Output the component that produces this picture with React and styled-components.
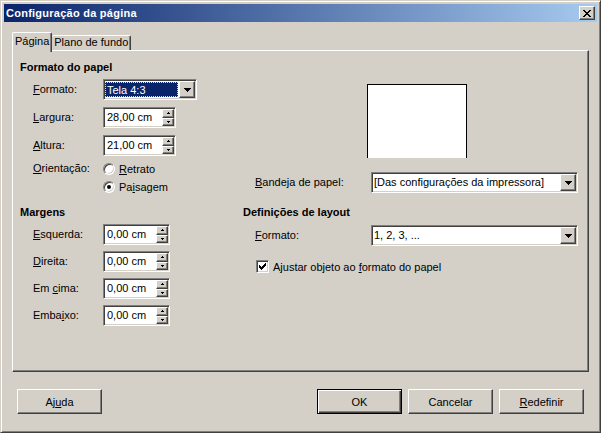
import React from 'react';
import styled, { createGlobalStyle } from 'styled-components';

const Global = createGlobalStyle`
  html, body { margin: 0; padding: 0; background: #D4D0C8; }
  body { font-family: "Liberation Sans", Arial, sans-serif; font-size: 11px; color: #000; }
  * { box-sizing: border-box; }
`;

const Window = styled.div`
  width: 601px;
  height: 433px;
  background: #D4D0C8;
  border: 1px solid;
  border-color: #D4D0C8 #404040 #404040 #D4D0C8;
  box-shadow: inset 1px 1px #fff, inset -1px -1px #808080;
  padding: 3px;
  display: flex;
  flex-direction: column;
`;

const TitleBar = styled.div`
  height: 18px;
  flex: 0 0 18px;
  background: linear-gradient(to right, #0A246A, #A6CAF0);
  display: flex;
  align-items: center;
  justify-content: space-between;
  padding: 0 2px 0 2px;
`;

const TitleText = styled.span`
  color: #fff;
  font-weight: bold;
  font-size: 11px;
  letter-spacing: 0.25px;
  line-height: 18px;
`;

const Raised = `
  background: #D4D0C8;
  border: 1px solid;
  border-color: #fff #404040 #404040 #fff;
  box-shadow: inset -1px -1px #808080, inset 1px 1px #D4D0C8;
`;

const CloseBtn = styled.div`
  ${Raised}
  width: 16px;
  height: 14px;
  display: flex;
  align-items: center;
  justify-content: center;
`;

const Body = styled.div`
  flex: 1;
  display: flex;
  flex-direction: column;
  padding: 10px 8px 0 8px;
`;

const TabStrip = styled.div`
  display: flex;
  align-items: flex-end;
  height: 18px;
  position: relative;
  z-index: 1;
`;

const Tab = styled.div`
  background: #D4D0C8;
  border-top: 1px solid #fff;
  border-left: ${p => (p.$active ? '1px solid #fff' : 'none')};
  border-right: 1px solid #404040;
  box-shadow: inset -1px 0 #808080;
  border-radius: 2px 2px 0 0;
  height: ${p => (p.$active ? 20 : 15)}px;
  margin-bottom: ${p => (p.$active ? -2 : 0)}px;
  padding: ${p => (p.$active ? '1px 2px 0 2px' : '0 2px 0 2px')};
  line-height: ${p => (p.$active ? 15 : 13)}px;
  white-space: nowrap;
`;

const Panel = styled.div`
  height: 322px;
  border: 1px solid;
  border-color: #fff #404040 #404040 #fff;
  box-shadow: inset -1px -1px #808080;
  padding: 10px 0 0 7px;
  display: grid;
  grid-template-columns: 223px 1fr;
  grid-template-rows: 132px auto;
  row-gap: 13px;
  align-content: start;
`;

const Group = styled.div`
  display: flex;
  flex-direction: column;
`;

const Heading = styled.div`
  font-weight: bold;
  line-height: 13px;
  height: 13px;
  white-space: nowrap;
`;

const Row = styled.div`
  display: flex;
  align-items: center;
  height: ${p => p.$h || 21}px;
  margin-top: ${p => p.$mt || 0}px;
  margin-left: ${p => (p.$ml === undefined ? 13 : p.$ml)}px;
`;

const Label = styled.span`
  width: ${p => p.$w || 70}px;
  flex: 0 0 ${p => p.$w || 70}px;
  white-space: nowrap;
  line-height: 13px;
`;

const Sunken = styled.div`
  width: ${p => p.$w}px;
  height: 21px;
  display: flex;
  background: #fff;
  border: 1px solid;
  border-color: #808080 #fff #fff #808080;
  box-shadow: inset 1px 1px #404040, inset -1px -1px #D4D0C8;
  padding: 1px;
`;

const Value = styled.div`
  flex: 1;
  display: flex;
  align-items: center;
  padding-left: ${p => p.$pl === undefined ? 2 : p.$pl}px;
  white-space: nowrap;
  overflow: hidden;
  line-height: 13px;
`;

const Highlight = styled.div`
  flex: 1;
  margin: 1px 1px 1px 0;
  background: #0A246A;
  color: #fff;
  border: 1px dotted #E8E0A0;
  display: flex;
  align-items: center;
  padding-left: 1px;
  white-space: nowrap;
`;

const Spinner = styled.div`
  width: 12px;
  display: flex;
  flex-direction: column;
`;

const SpinBtn = styled.div`
  ${Raised}
  flex: 1;
  display: flex;
  align-items: center;
  justify-content: center;
`;

const ComboBtn = styled.div`
  ${Raised}
  width: 16px;
  height: 17px;
  display: flex;
  align-items: center;
  justify-content: center;
`;

const Radio = styled.div`
  width: 12px;
  height: 12px;
  flex: 0 0 12px;
  border-radius: 50%;
  background: #fff;
  border: 1px solid;
  border-color: #808080 #fff #fff #808080;
  box-shadow: inset 1px 1px #404040, inset -1px -1px #D4D0C8;
  display: flex;
  align-items: center;
  justify-content: center;
  margin-right: 4px;
  &::after {
    content: '';
    display: ${p => (p.$checked ? 'block' : 'none')};
    width: 4px;
    height: 4px;
    border-radius: 50%;
    background: #000;
  }
`;

const Check = styled.div`
  width: 13px;
  height: 13px;
  flex: 0 0 13px;
  background: #fff;
  border: 1px solid;
  border-color: #808080 #fff #fff #808080;
  box-shadow: inset 1px 1px #404040, inset -1px -1px #D4D0C8;
  display: flex;
  align-items: center;
  justify-content: center;
  margin-right: 4px;
`;

const Preview = styled.div`
  width: 100px;
  height: 74px;
  margin: 23px 0 0 124px;
  background: #fff;
  border: 1px solid #000;
  border-bottom: none;
`;

const Footer = styled.div`
  display: flex;
  align-items: center;
  padding: 0 5px;
  margin-top: 17px;
`;

const Spacer = styled.div`
  flex: 1;
`;

const ButtonGroup = styled.div`
  display: flex;
  gap: 6px;
`;

const Button = styled.div`
  ${Raised}
  width: 85px;
  height: 25px;
  display: flex;
  align-items: center;
  justify-content: center;
  ${p => p.$default ? `
    border: 1px solid #000;
    box-shadow: inset 1px 1px #fff, inset -1px -1px #404040, inset -2px -2px #808080;
  ` : ''}
`;

const XIcon = () => (
  <svg width="8" height="7" viewBox="0 0 8 7" shapeRendering="crispEdges">
    <path
      d="M0 0h2v1H0zM6 0h2v1H6zM1 1h2v1H1zM5 1h2v1H5zM2 2h4v1H2zM3 3h2v1H3zM2 4h4v1H2zM1 5h2v1H1zM5 5h2v1H5zM0 6h2v1H0zM6 6h2v1H6z"
      fill="#000"
    />
  </svg>
);

const DownArrow = () => (
  <svg width="7" height="4" viewBox="0 0 7 4" shapeRendering="crispEdges">
    <path d="M0 0h7v1H0zM1 1h5v1H1zM2 2h3v1H2zM3 3h1v1H3z" fill="#000" />
  </svg>
);

const TinyArrow = ({ up }) => (
  <svg width="3" height="2" viewBox="0 0 3 2" shapeRendering="crispEdges">
    {up ? (
      <path d="M1 0h1v1H1zM0 1h3v1H0z" fill="#000" />
    ) : (
      <path d="M0 0h3v1H0zM1 1h1v1H1z" fill="#000" />
    )}
  </svg>
);

const CheckMark = () => (
  <svg width="7" height="7" viewBox="0 0 7 7" shapeRendering="crispEdges">
    <path d="M6 0h1v3H6zM5 1h1v3H5zM4 2h1v3H4zM3 3h1v3H3zM2 4h1v3H2zM1 3h1v3H1zM0 2h1v3H0z" fill="#000" />
  </svg>
);

const SpinField = ({ w, value }) => (
  <Sunken $w={w}>
    <Value>{value}</Value>
    <Spinner>
      <SpinBtn><TinyArrow up /></SpinBtn>
      <SpinBtn><TinyArrow /></SpinBtn>
    </Spinner>
  </Sunken>
);

const Combo = ({ w, value, selected }) => (
  <Sunken $w={w}>
    {selected ? <Highlight>{value}</Highlight> : <Value $pl={1}>{value}</Value>}
    <ComboBtn><DownArrow /></ComboBtn>
  </Sunken>
);

export default function App() {
  return (
    <>
      <Global />
      <Window>
        <TitleBar>
          <TitleText>Configuração da página</TitleText>
          <CloseBtn><XIcon /></CloseBtn>
        </TitleBar>
        <Body>
          <TabStrip>
            <Tab $active>Página</Tab>
            <Tab>Plano de fundo</Tab>
          </TabStrip>
          <Panel>
            <Group>
              <Heading>Formato do papel</Heading>
              <Row $mt={5}>
                <Label><u>F</u>ormato:</Label>
                <Combo w={94} value="Tela 4:3" selected />
              </Row>
              <Row $mt={7}>
                <Label><u>L</u>argura:</Label>
                <SpinField w={73} value="28,00 cm" />
              </Row>
              <Row $mt={7}>
                <Label><u>A</u>ltura:</Label>
                <SpinField w={73} value="21,00 cm" />
              </Row>
              <Row $mt={6} $h={13}>
                <Label><u>O</u>rientação:</Label>
                <Radio />
                <span><u>R</u>etrato</span>
              </Row>
              <Row $mt={6} $h={13}>
                <Label />
                <Radio $checked />
                <span>Pa<u>i</u>sagem</span>
              </Row>
            </Group>
            <Group>
              <Preview />
              <Row $mt={14} $ml={12}>
                <Label $w={116}><u>B</u>andeja de papel:</Label>
                <Combo w={207} value="[Das configurações da impressora]" />
              </Row>
            </Group>
            <Group>
              <Heading>Margens</Heading>
              <Row $mt={5}>
                <Label><u>E</u>squerda:</Label>
                <SpinField w={67} value="0,00 cm" />
              </Row>
              <Row $mt={6}>
                <Label><u>D</u>ireita:</Label>
                <SpinField w={67} value="0,00 cm" />
              </Row>
              <Row $mt={6}>
                <Label>Em <u>c</u>ima:</Label>
                <SpinField w={67} value="0,00 cm" />
              </Row>
              <Row $mt={6}>
                <Label>Emba<u>i</u>xo:</Label>
                <SpinField w={67} value="0,00 cm" />
              </Row>
            </Group>
            <Group>
              <Heading>Definições de layout</Heading>
              <Row $mt={6} $ml={12}>
                <Label $w={116}><u>F</u>ormato:</Label>
                <Combo w={207} value="1, 2, 3, ..." />
              </Row>
              <Row $mt={14} $h={13}>
                <Check><CheckMark /></Check>
                <span>Ajustar objeto ao <u>f</u>ormato do papel</span>
              </Row>
            </Group>
          </Panel>
          <Footer>
            <Button>Aj<u>u</u>da</Button>
            <Spacer />
            <ButtonGroup>
              <Button $default>OK</Button>
              <Button>Cancelar</Button>
              <Button><u>R</u>edefinir</Button>
            </ButtonGroup>
          </Footer>
        </Body>
      </Window>
    </>
  );
}
